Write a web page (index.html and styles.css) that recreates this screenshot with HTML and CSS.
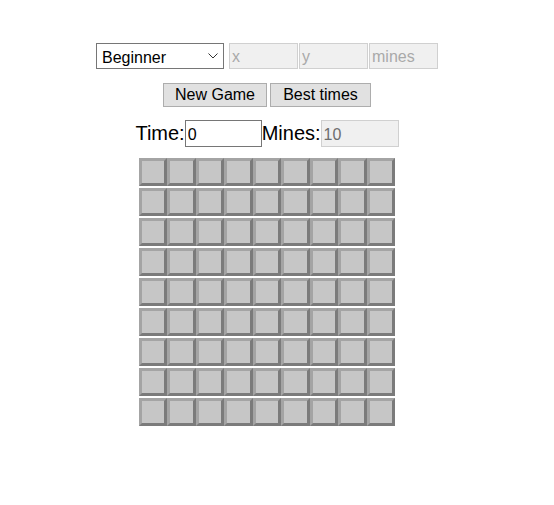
FILE: index.html
```html
<!DOCTYPE html>
<html lang="en">
<head>
    <meta charset="UTF-8">
    <title>Minesweeper</title>
    <link rel="stylesheet" href="styles.css">
</head>
<body>
    <div class="page">
        <div class="settings">
            <div class="level">
                <select id="level">
                    <option>Beginner</option>
                    <option>Intermediate</option>
                    <option>Expert</option>
                    <option>Custom</option>
                </select>
                <svg class="chevron" width="10" height="6" viewBox="0 0 10 6"><path d="M0.5 0.5 L5 5 L9.5 0.5" fill="none" stroke="#333" stroke-width="1"/></svg>
            </div>
            <input class="custom" type="text" placeholder="x" disabled>
            <input class="custom" type="text" placeholder="y" disabled>
            <input class="custom" type="text" placeholder="mines" disabled>
        </div>

        <div class="actions">
            <button class="btn new">New Game</button>
            <button class="btn best">Best times</button>
        </div>

        <div class="status">
            <span class="label">Time:</span><input class="time" type="text" value="0"><span class="label">Mines:</span><input class="mines" type="text" value="10" disabled>
        </div>

        <div class="board">
            <div class="cell"></div><div class="cell"></div><div class="cell"></div><div class="cell"></div><div class="cell"></div><div class="cell"></div><div class="cell"></div><div class="cell"></div><div class="cell"></div>
            <div class="cell"></div><div class="cell"></div><div class="cell"></div><div class="cell"></div><div class="cell"></div><div class="cell"></div><div class="cell"></div><div class="cell"></div><div class="cell"></div>
            <div class="cell"></div><div class="cell"></div><div class="cell"></div><div class="cell"></div><div class="cell"></div><div class="cell"></div><div class="cell"></div><div class="cell"></div><div class="cell"></div>
            <div class="cell"></div><div class="cell"></div><div class="cell"></div><div class="cell"></div><div class="cell"></div><div class="cell"></div><div class="cell"></div><div class="cell"></div><div class="cell"></div>
            <div class="cell"></div><div class="cell"></div><div class="cell"></div><div class="cell"></div><div class="cell"></div><div class="cell"></div><div class="cell"></div><div class="cell"></div><div class="cell"></div>
            <div class="cell"></div><div class="cell"></div><div class="cell"></div><div class="cell"></div><div class="cell"></div><div class="cell"></div><div class="cell"></div><div class="cell"></div><div class="cell"></div>
            <div class="cell"></div><div class="cell"></div><div class="cell"></div><div class="cell"></div><div class="cell"></div><div class="cell"></div><div class="cell"></div><div class="cell"></div><div class="cell"></div>
            <div class="cell"></div><div class="cell"></div><div class="cell"></div><div class="cell"></div><div class="cell"></div><div class="cell"></div><div class="cell"></div><div class="cell"></div><div class="cell"></div>
            <div class="cell"></div><div class="cell"></div><div class="cell"></div><div class="cell"></div><div class="cell"></div><div class="cell"></div><div class="cell"></div><div class="cell"></div><div class="cell"></div>
        </div>
    </div>
</body>
</html>
```

FILE: styles.css
```css
body {
    font-family: 'Liberation Sans', Arial, sans-serif;
    background-color: #ffffff;
    color: #000000;
    margin: 0;
    padding: 0;
}

.page {
    width: 534px;
    padding-top: 43px;
    display: flex;
    flex-direction: column;
    align-items: center;
}

/* Level chooser row */
.settings {
    display: flex;
    align-items: center;
    height: 26px;
}

.level {
    position: relative;
    margin-right: 5px;
}

.level select {
    appearance: none;
    -webkit-appearance: none;
    width: 128px;
    height: 26px;
    padding: 2px 0 0 5px;
    font-family: inherit;
    font-size: 16px;
    color: #000;
    background-color: #fff;
    border: 1px solid #767676;
    border-radius: 0;
    display: block;
}

.chevron {
    position: absolute;
    right: 6px;
    top: 10px;
    pointer-events: none;
}

.custom {
    box-sizing: border-box;
    width: 69px;
    height: 26px;
    margin: 0;
    padding: 2px 2px 0;
    font-family: inherit;
    font-size: 16px;
    background-color: #f0f0f0;
    border: 1px solid #d0d0d0;
    border-radius: 0;
}

.custom + .custom {
    margin-left: 1px;
}

.custom::placeholder {
    color: #a9a9a9;
}

/* Buttons */
.actions {
    display: flex;
    gap: 3px;
    margin-top: 14px;
    height: 24px;
}

.btn {
    height: 24px;
    padding: 0 7px;
    font-family: inherit;
    font-size: 16px;
    color: #000;
    background-color: #e1e1e1;
    border: 1px solid #adadad;
    border-radius: 0;
}

.btn.new {
    width: 104px;
}

.btn.best {
    width: 101px;
}

/* Time / mines */
.status {
    display: flex;
    align-items: center;
    margin-top: 13px;
    height: 27px;
}

.label {
    font-size: 20px;
}

.status input {
    box-sizing: border-box;
    height: 27px;
    padding: 2px 2px 0;
    font-family: inherit;
    font-size: 16px;
    border-radius: 0;
    margin: 0;
}

.time {
    width: 77px;
    border: 1px solid #767676;
    background-color: #fff;
    color: #000;
}

.mines {
    width: 78px;
    border: 1px solid #d0d0d0;
    background-color: #f0f0f0;
    color: #6d6d6d;
}

/* Board */
.board {
    display: grid;
    grid-template-columns: repeat(9, 1fr);
    grid-auto-rows: 28px;
    row-gap: 2px;
    width: 256px;
    margin-top: 11px;
}

.cell {
    box-sizing: border-box;
    background-color: #c6c6c6;
    border-width: 3px;
    border-style: solid;
    border-color: #a4a4a4 #7b7b7b #7b7b7b #a4a4a4;
}
```
